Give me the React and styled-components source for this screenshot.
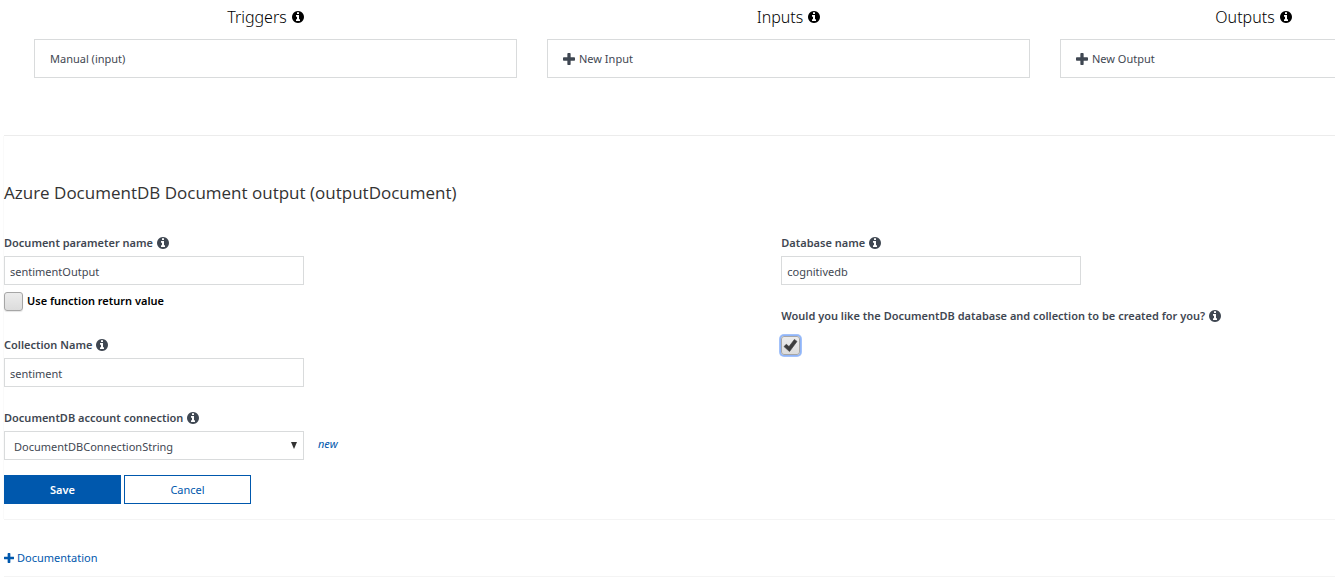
import React from "react";
import styled, { createGlobalStyle, css } from "styled-components";

const GlobalStyle = createGlobalStyle`
  *, *::before, *::after { box-sizing: border-box; }
  body {
    margin: 0;
    background: #fff;
    color: #3f4752;
    font-family: "Noto Sans", "Open Sans", sans-serif;
    font-size: 11px;
    line-height: 16px;
    overflow-x: hidden;
  }
  button, input, select { font: inherit; color: inherit; }
`;

const Page = styled.main`
  overflow: hidden;
`;

const BindingStrip = styled.section`
  display: grid;
  grid-template-columns: repeat(3, minmax(483px, 1fr));
  gap: 30px;
  padding: 5px 0 57px 34px;
`;

const BindingColumn = styled.div`
  display: flex;
  flex-direction: column;
  gap: 10px;
`;

const BindingHeading = styled.h2`
  display: flex;
  justify-content: center;
  align-items: center;
  gap: 5px;
  margin: 0;
  padding-right: ${(p) => p.$inset}px;
  color: #000;
  font-size: 16px;
  font-weight: 300;
  line-height: 24px;
`;

const BindingButton = styled.button`
  display: flex;
  align-items: center;
  gap: 4px;
  height: 39px;
  padding: 0 15px;
  border: 1px solid #d9dbdc;
  background: #fff;
  text-align: left;
`;

const Editor = styled.form`
  margin: 0 0 0 3px;
  padding: 45px 0 15px;
  border-left: 1px solid #fafafa;
`;

const Divider = styled.hr`
  margin: 0 0 0 4px;
  border: 0;
  border-top: 1px solid ${(p) => (p.$faint ? "#f4f4f4" : "#ececec")};
`;

const EditorTitle = styled.h1`
  margin: 0 0 30px;
  color: #333;
  font-family: "Open Sans", "Noto Sans", sans-serif;
  font-size: 17px;
  font-weight: 400;
  line-height: 24px;
`;

const FieldGrid = styled.div`
  display: grid;
  grid-template-columns: 7fr 5fr;
  column-gap: 2px;
`;

const FieldColumn = styled.div`
  display: flex;
  flex-direction: column;
  gap: 23px;
`;

const Field = styled.div`
  display: flex;
  flex-direction: column;
  align-items: flex-start;
  gap: 5px;
`;

const FieldLabel = styled.label`
  display: flex;
  align-items: center;
  gap: 4px;
  font-weight: 600;
  white-space: nowrap;
`;

const control = css`
  width: 300px;
  height: 29px;
  border: 1px solid #d9dbdc;
  border-radius: 0;
  background: #fff;
  outline: none;
`;

const TextInput = styled.input`
  ${control}
  padding: 2px 5px 0;
`;

const SelectBox = styled.div`
  display: grid;
  align-items: center;
  & > * { grid-area: 1 / 1; }
`;

const Select = styled.select`
  ${control}
  appearance: none;
  padding: 2px 24px 0 9px;
`;

const SelectArrow = styled.svg`
  justify-self: end;
  margin-right: 7px;
  pointer-events: none;
`;

const InlineRow = styled.div`
  display: flex;
  align-items: center;
  gap: 14px;
`;

const NewLink = styled.a`
  padding-bottom: 3px;
  color: #0058ad;
  font-style: italic;
  text-decoration: none;
`;

const CheckRow = styled.label`
  display: flex;
  gap: 4px;
  padding: 7px 0 3px;
  color: #000;
  font-weight: 600;
  line-height: 17px;
`;

const CheckFrame = styled.span`
  display: grid;
  place-items: center;
  width: 19px;
  height: 19px;
  & > * { grid-area: 1 / 1; }
  & > svg { pointer-events: none; }
`;

const CheckInput = styled.input`
  appearance: none;
  width: 19px;
  height: 19px;
  margin: 0;
  border: 1px solid #a6a6a6;
  border-radius: 3px;
  background: linear-gradient(#ececec, #dcdcdc);
  outline: none;
  box-shadow: ${(p) => (p.$highlighted ? "0 0 0 1px #8fb4f8, 0 0 0 2px #a3c2fa" : "0 1px 1px #e6e6e6")};
`;

const Actions = styled.div`
  display: flex;
  gap: 3px;
  margin-top: 15px;
`;

const ActionButton = styled.button`
  width: ${(p) => (p.$primary ? 117 : 127)}px;
  height: 29px;
  padding: 0;
  border: 1px solid #0058ad;
  background: ${(p) => (p.$primary ? "#0058ad" : "#fff")};
  color: ${(p) => (p.$primary ? "#fff" : "#0058ad")};
  font-weight: ${(p) => (p.$primary ? 600 : 400)};
`;

const Documentation = styled.section`
  margin-left: 4px;
  padding: 30px 0 10px;
`;

const DocumentationLink = styled.a`
  display: inline-flex;
  align-items: center;
  gap: 3px;
  color: #0058ad;
  text-decoration: none;
  vertical-align: top;
`;

const InfoIcon = () => (
  <svg width="12" height="12" viewBox="0 0 1536 1536" fill="currentColor" aria-hidden="true">
    <path d="M1024 1248v-160q0-14-9-23t-23-9h-96v-512q0-14-9-23t-23-9h-320q-14 0-23 9t-9 23v160q0 14 9 23t23 9h96v320h-96q-14 0-23 9t-9 23v160q0 14 9 23t23 9h448q14 0 23-9t9-23zM896 352v-160q0-14-9-23t-23-9h-192q-14 0-23 9t-9 23v160q0 14 9 23t23 9h192q14 0 23-9t9-23zM1536 768q0 209-103 385.5t-279.5 279.5-385.5 103-385.5-103-279.5-279.5-103-385.5 103-385.5 279.5-279.5 385.5-103 385.5 103 279.5 279.5 103 385.5z" />
  </svg>
);

const PlusIcon = ({ size }) => (
  <svg width={size} height={size} viewBox="0 -96 1408 1408" fill="currentColor" aria-hidden="true">
    <path d="M1408 512v192q0 40-28 68t-68 28h-416v416q0 40-28 68t-68 28h-192q-40 0-68-28t-28-68v-416h-416q-40 0-68-28t-28-68v-192q0-40 28-68t68-28h416v-416q0-40 28-68t68-28h192q40 0 68 28t28 68v416h416q40 0 68 28t28 68z" />
  </svg>
);

const CheckIcon = () => (
  <svg width="15" height="15" viewBox="0 0 15 15" aria-hidden="true">
    <path d="M1 8.6 3.3 6.2 6 8.6 11.4 1.4 14 3.4 6.5 13.6z" fill="#3c3c3c" stroke="#3c3c3c" strokeWidth=".6" strokeLinejoin="round" />
  </svg>
);

const bindings = [
  { title: "Triggers", item: "Manual (input)", inset: 20 },
  { title: "Inputs", item: "New Input", inset: 0, add: true },
  { title: "Outputs", item: "New Output", inset: 96, add: true },
];

function TextField({ id, label, value, children }) {
  return (
    <div>
      <Field>
        <FieldLabel htmlFor={id}>{label} <InfoIcon /></FieldLabel>
        <TextInput id={id} type="text" defaultValue={value} />
      </Field>
      {children}
    </div>
  );
}

export default function App() {
  return (
    <>
      <GlobalStyle />
      <Page>
        <BindingStrip>
          {bindings.map((b) => (
            <BindingColumn key={b.title}>
              <BindingHeading $inset={b.inset}>{b.title} <InfoIcon /></BindingHeading>
              <BindingButton type="button">
                {b.add && <PlusIcon size={12} />}
                {b.item}
              </BindingButton>
            </BindingColumn>
          ))}
        </BindingStrip>
        <Divider />
        <Editor onSubmit={(e) => e.preventDefault()}>
          <EditorTitle>Azure DocumentDB Document output (outputDocument)</EditorTitle>
          <FieldGrid>
            <FieldColumn>
              <TextField id="parameter" label="Document parameter name" value="sentimentOutput">
                <CheckRow>
                  <CheckFrame><CheckInput type="checkbox" /></CheckFrame>
                  Use function return value
                </CheckRow>
              </TextField>
              <TextField id="collection" label="Collection Name" value="sentiment" />
              <Field>
                <FieldLabel htmlFor="connection">DocumentDB account connection <InfoIcon /></FieldLabel>
                <InlineRow>
                  <SelectBox>
                    <Select id="connection" defaultValue="DocumentDBConnectionString">
                      <option>DocumentDBConnectionString</option>
                    </Select>
                    <SelectArrow width="6" height="7" viewBox="0 0 6 7" aria-hidden="true">
                      <path d="M0 0h6L3 7z" fill="#333" />
                    </SelectArrow>
                  </SelectBox>
                  <NewLink href="#new">new</NewLink>
                </InlineRow>
              </Field>
            </FieldColumn>
            <FieldColumn>
              <TextField id="database" label="Database name" value="cognitivedb" />
              <Field>
                <FieldLabel htmlFor="create">
                  Would you like the DocumentDB database and collection to be created for you? <InfoIcon />
                </FieldLabel>
                <CheckRow as="div">
                  <CheckFrame>
                    <CheckInput id="create" type="checkbox" defaultChecked $highlighted />
                    <CheckIcon />
                  </CheckFrame>
                </CheckRow>
              </Field>
            </FieldColumn>
          </FieldGrid>
          <Actions>
            <ActionButton type="submit" $primary>Save</ActionButton>
            <ActionButton type="button">Cancel</ActionButton>
          </Actions>
        </Editor>
        <Divider $faint />
        <Documentation>
          <DocumentationLink href="#documentation"><PlusIcon size={10} /> Documentation</DocumentationLink>
        </Documentation>
        <Divider $faint />
      </Page>
    </>
  );
}
